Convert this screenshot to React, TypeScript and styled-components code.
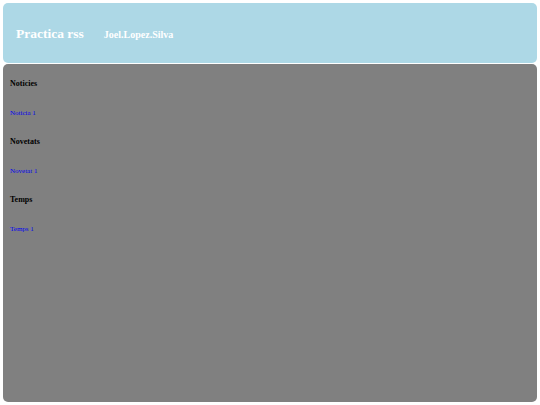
import React from 'react';
import styled, { createGlobalStyle } from 'styled-components';

const GlobalStyle = createGlobalStyle`
  html, body {
    margin: 0;
    padding: 0;
    background: #ffffff;
  }
  body {
    font-family: 'Liberation Serif', 'Times New Roman', serif;
  }
`;

const Page = styled.div`
  width: 540px;
  height: 405px;
  box-sizing: border-box;
  padding: 3px;
  display: flex;
  flex-direction: column;
  gap: 1px;
`;

const Header = styled.header`
  height: 60px;
  background: #add8e6;
  border-radius: 5px;
  display: flex;
  align-items: center;
  padding-left: 13px;
  padding-top: 1px;
  box-sizing: border-box;
  color: #ffffff;
  font-weight: bold;
`;

const Title = styled.span`
  font-size: 13.5px;
`;

const Author = styled.span`
  font-size: 10px;
  margin-left: 20px;
  margin-top: 1px;
`;

const Content = styled.main`
  flex: 1;
  background: #808080;
  border-radius: 5px;
  padding: 15px 7px;
  display: flex;
  flex-direction: column;
`;

const Section = styled.section`
  display: flex;
  flex-direction: column;
`;

const SectionTitle = styled.h3`
  margin: 0;
  height: 29px;
  font-size: 8px;
  font-weight: bold;
  color: #000000;
  line-height: 10px;
`;

const Item = styled.a`
  display: block;
  height: 29px;
  font-size: 7px;
  line-height: 10px;
  color: #0000ee;
  text-decoration: none;
`;

const sections = [
  { title: 'Noticies', item: 'Noticia 1' },
  { title: 'Novetats', item: 'Novetat 1' },
  { title: 'Temps', item: 'Temps 1' },
];

const App = () => (
  <>
    <GlobalStyle />
    <Page>
      <Header>
        <Title>Practica rss</Title>
        <Author>Joel.Lopez.Silva</Author>
      </Header>
      <Content>
        {sections.map((section) => (
          <Section key={section.title}>
            <SectionTitle>{section.title}</SectionTitle>
            <Item href="#">{section.item}</Item>
          </Section>
        ))}
      </Content>
    </Page>
  </>
);

export default App;
